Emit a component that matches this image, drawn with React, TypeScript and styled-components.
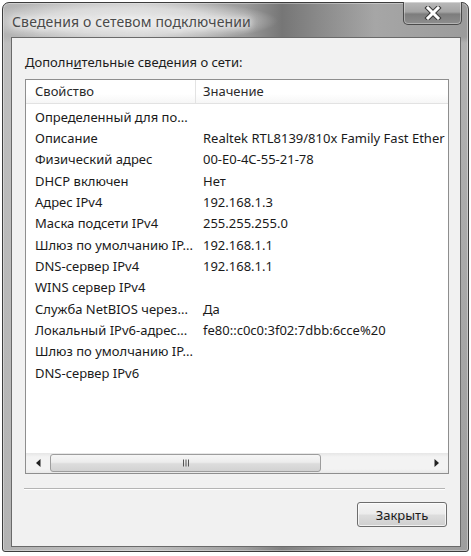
import React from "react";
import styled, { createGlobalStyle } from "styled-components";

const GlobalStyle = createGlobalStyle`
  html, body { margin: 0; padding: 0; background: #ffffff; }
  body { font-family: "Noto Sans", "Liberation Sans", sans-serif; }
  * { box-sizing: border-box; }
`;

const Page = styled.div`
  padding: 2px 0 0 2px;
`;

const Window = styled.div`
  width: 467px;
  height: 550px;
  border: 1px solid #3c3c3c;
  border-radius: 7px 7px 3px 3px;
  background:
    linear-gradient(180deg, rgba(255,255,255,0.0) 0px, rgba(255,255,255,0) 34px, rgba(200,200,200,0.5) 40px, rgba(170,170,170,0.2) 100%),
    linear-gradient(90deg, #b4b4b4 0%, #c6c6c6 30%, #9a9a9a 52%, #767676 60%, #8a8a8a 68%, #a6a6a6 80%, #9b9b9b 100%);
  display: flex;
  flex-direction: column;
  box-shadow: inset 0 0 0 1px rgba(255,255,255,0.35);
`;

const TitleBar = styled.div`
  height: 34px;
  display: flex;
  align-items: flex-start;
  justify-content: space-between;
  background: radial-gradient(ellipse 150px 22px at 125px 18px, rgba(235,235,235,0.95) 0%, rgba(225,225,225,0.8) 60%, rgba(225,225,225,0) 100%);
`;

const Title = styled.div`
  margin: 10px 0 0 9px;
  font-size: 14px;
  letter-spacing: 0.15px;
  color: #4a4a4a;
  line-height: 18px;
  text-shadow: 0 0 6px #ffffff, 0 0 10px #ffffff;
`;

const CloseButton = styled.div`
  width: 59px;
  height: 23px;
  margin: -1px 6px 0 0;
  border: 1px solid #4a4a4a;
  border-top: none;
  border-radius: 0 0 5px 5px;
  background: linear-gradient(180deg, #b9b9b9 0%, #a4a4a4 45%, #7d7d7d 55%, #8e8e8e 100%);
  box-shadow: inset 0 0 0 1px rgba(255,255,255,0.35);
  display: flex;
  align-items: center;
  justify-content: center;
`;

const Client = styled.div`
  flex: 1;
  margin: 0 7px 4px 8px;
  border: 1px solid #6a6a6a;
  background: #f1f1f1;
  display: flex;
  flex-direction: column;
  padding: 16px 11px 0 13px;
`;

const Label = styled.div`
  font-size: 13px;
  line-height: 16px;
  color: #1c1c1c;
  height: 16px;
  white-space: nowrap;
`;

const AccessKey = styled.span`
  text-decoration: underline;
`;

const ListBox = styled.div`
  margin-top: 9px;
  height: 395px;
  border: 1px solid #8e8e8e;
  background: #ffffff;
  display: flex;
  flex-direction: column;
  overflow: hidden;
`;

const Header = styled.div`
  height: 24px;
  display: flex;
  border-bottom: 1px solid #e2e2e2;
  background: linear-gradient(180deg, #ffffff 0%, #ffffff 60%, #f6f6f6 100%);
  flex-shrink: 0;
`;

const HeaderCell = styled.div<{ $w?: number; $pad: number }>`
  ${(p) => (p.$w ? `width: ${p.$w}px; border-right: 1px solid #e3e3e3;` : "flex: 1;")}
  padding-left: ${(p) => p.$pad}px;
  font-size: 13px;
  line-height: 23px;
  color: #2a2a2a;
  white-space: nowrap;
`;

const Rows = styled.div`
  flex: 1;
  padding-top: 2px;
  overflow: hidden;
`;

const Row = styled.div`
  height: 21.33px;
  display: flex;
  align-items: center;
  font-size: 13px;
  color: #1a1a1a;
  white-space: nowrap;
`;

const Cell = styled.div<{ $w?: number; $pad: number }>`
  ${(p) => (p.$w ? `width: ${p.$w}px;` : "flex: 1; min-width: 0;")}
  padding-left: ${(p) => p.$pad}px;
  overflow: hidden;
  white-space: nowrap;
`;

const HScroll = styled.div`
  height: 20px;
  display: flex;
  align-items: stretch;
  background: linear-gradient(180deg, #e6e6e6 0%, #f3f3f3 20%, #f3f3f3 80%, #e8e8e8 100%);
  flex-shrink: 0;
`;

const ArrowBtn = styled.div`
  width: 24px;
  display: flex;
  align-items: center;
  justify-content: center;
`;

const Thumb = styled.div`
  width: 271px;
  margin: 1px 0;
  border: 1px solid #9d9d9d;
  border-radius: 3px;
  background: linear-gradient(180deg, #f6f6f6 0%, #ececec 45%, #dcdcdc 55%, #d2d2d2 100%);
  display: flex;
  align-items: center;
  justify-content: center;
`;

const Track = styled.div`
  flex: 1;
`;

const Separator = styled.div`
  margin: 14px 4px 0 -1px;
  border-top: 1px solid #b4b4b4;
  border-bottom: 1px solid #ffffff;
`;

const ButtonRow = styled.div`
  display: flex;
  justify-content: flex-end;
  margin-top: 12px;
  padding-right: 2px;
`;

const PushButton = styled.div`
  width: 90px;
  height: 25px;
  border: 1px solid #6d6d6d;
  border-radius: 3px;
  background: linear-gradient(180deg, #f4f4f4 0%, #ececec 48%, #dddddd 52%, #cfcfcf 100%);
  box-shadow: inset 0 0 0 1px rgba(255,255,255,0.7);
  font-size: 13px;
  color: #1a1a1a;
  display: flex;
  align-items: center;
  justify-content: center;
`;

const rows: [string, string][] = [
  ["Определенный для по...", ""],
  ["Описание", "Realtek RTL8139/810x Family Fast Ether"],
  ["Физический адрес", "00-E0-4C-55-21-78"],
  ["DHCP включен", "Нет"],
  ["Адрес IPv4", "192.168.1.3"],
  ["Маска подсети IPv4", "255.255.255.0"],
  ["Шлюз по умолчанию IP...", "192.168.1.1"],
  ["DNS-сервер IPv4", "192.168.1.1"],
  ["WINS сервер IPv4", ""],
  ["Служба NetBIOS через...", "Да"],
  ["Локальный IPv6-адрес...", "fe80::c0c0:3f02:7dbb:6cce%20"],
  ["Шлюз по умолчанию IP...", ""],
  ["DNS-сервер IPv6", ""],
];

const Triangle = ({ dir }: { dir: "left" | "right" }) => (
  <svg width="5" height="8" viewBox="0 0 5 8">
    {dir === "left" ? <path d="M4.5 0 L0 4 L4.5 8 Z" fill="#222" /> : <path d="M0.5 0 L5 4 L0.5 8 Z" fill="#222" />}
  </svg>
);

const Grip = () => (
  <svg width="8" height="8" viewBox="0 0 8 8">
    <path d="M1.5 0.5 V7.5 M4 0.5 V7.5 M6.5 0.5 V7.5" stroke="#555" strokeWidth="1" />
  </svg>
);

const CloseX = () => (
  <svg width="18" height="14" viewBox="0 0 18 14">
    <path d="M4 2 L14 12 M14 2 L4 12" stroke="#3a3a3a" strokeWidth="5" strokeLinecap="square" />
    <path d="M4 2 L14 12 M14 2 L4 12" stroke="#ffffff" strokeWidth="3" strokeLinecap="square" />
  </svg>
);

export default function App() {
  return (
    <Page>
      <GlobalStyle />
      <Window>
        <TitleBar>
          <Title>Сведения о сетевом подключении</Title>
          <CloseButton>
            <CloseX />
          </CloseButton>
        </TitleBar>
        <Client>
          <Label>
            Дополн<AccessKey>и</AccessKey>тельные сведения о сети:
          </Label>
          <ListBox>
            <Header>
              <HeaderCell $w={170} $pad={9}>Свойство</HeaderCell>
              <HeaderCell $pad={7}>Значение</HeaderCell>
            </Header>
            <Rows>
              {rows.map(([k, v], i) => (
                <Row key={i}>
                  <Cell $w={170} $pad={9}>{k}</Cell>
                  <Cell $pad={7}>{v}</Cell>
                </Row>
              ))}
            </Rows>
            <HScroll>
              <ArrowBtn>
                <Triangle dir="left" />
              </ArrowBtn>
              <Thumb>
                <Grip />
              </Thumb>
              <Track />
              <ArrowBtn>
                <Triangle dir="right" />
              </ArrowBtn>
            </HScroll>
          </ListBox>
          <Separator />
          <ButtonRow>
            <PushButton>Закрыть</PushButton>
          </ButtonRow>
        </Client>
      </Window>
    </Page>
  );
}
